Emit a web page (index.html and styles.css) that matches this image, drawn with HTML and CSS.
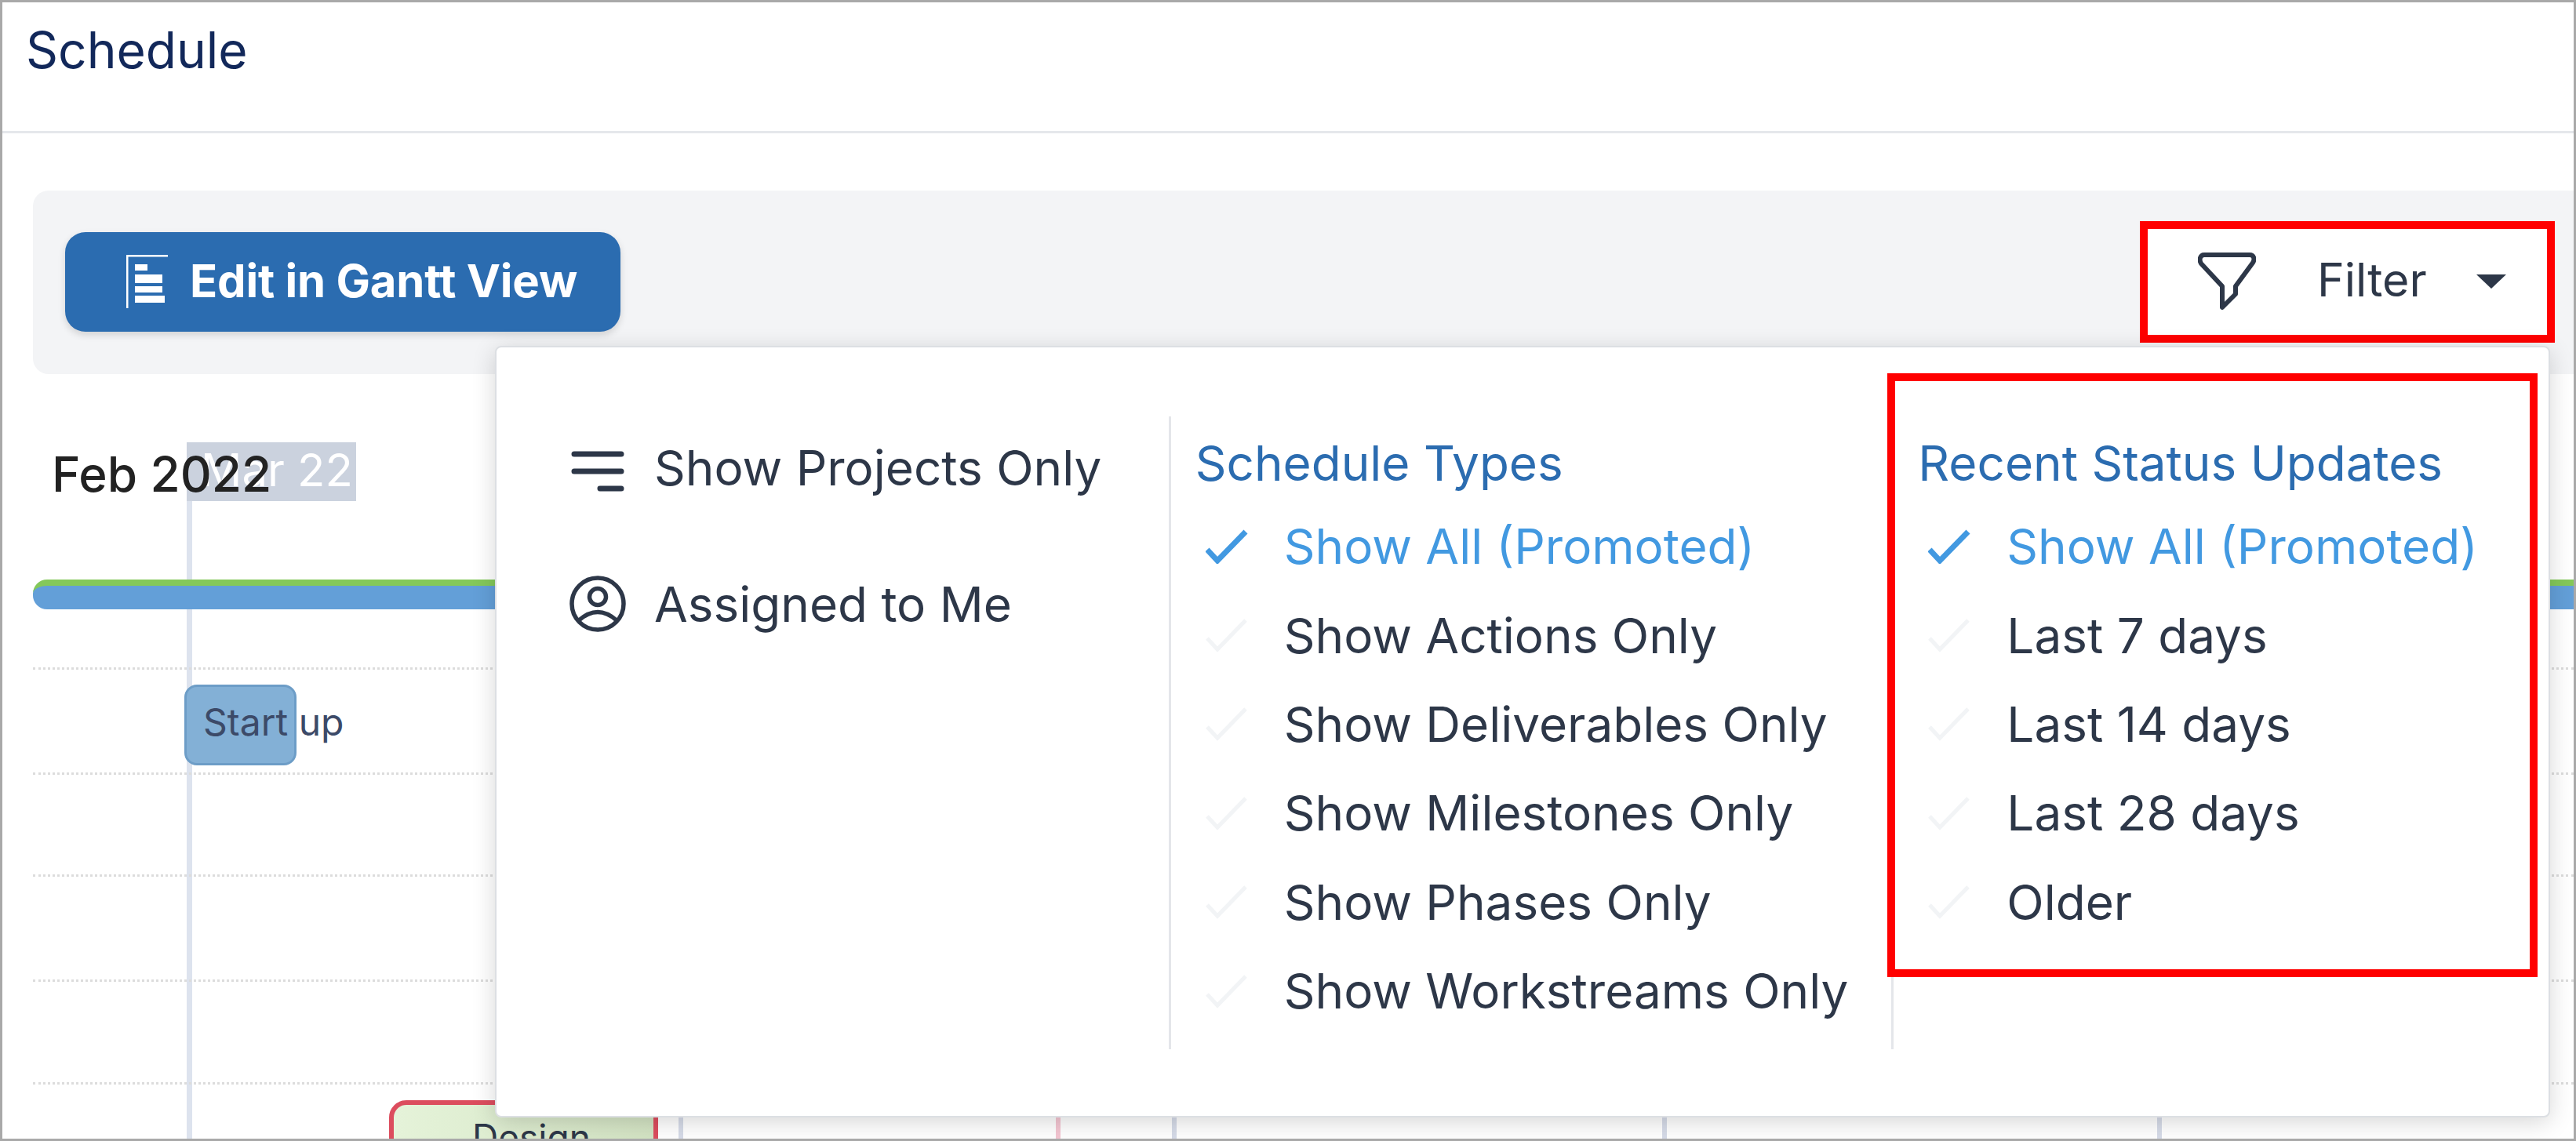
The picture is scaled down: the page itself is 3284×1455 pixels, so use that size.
FILE: index.html
```html
<!DOCTYPE html>
<html lang="en">
<head>
  <meta charset="UTF-8">
  <title>Schedule</title>
  <link rel="stylesheet" href="styles.css">
</head>
<body>
  <div class="frame">
    <div class="page-title">Schedule</div>

    <div class="toolbar">
      <button class="gantt-btn">
        <svg class="gantt-icon" viewBox="0 0 53 68" fill="#fff">
          <rect x="0" y="0" width="53" height="2.5"/>
          <rect x="0" y="0" width="2.5" height="68"/>
          <rect x="11" y="12" width="16" height="8"/>
          <rect x="11" y="25" width="35" height="11"/>
          <rect x="11" y="40" width="35" height="8"/>
          <rect x="11" y="52" width="38" height="9"/>
        </svg>
        <span class="gantt-label">Edit in Gantt View</span>
      </button>
      <div class="filter-btn">
        <svg class="funnel-icon" viewBox="0 0 74 74" fill="none" stroke="#2d3748" stroke-width="6" stroke-linejoin="round">
          <path d="M8 3H66C71 3 73 8 70 13L48 43V53L31 70V43L4 14C1 9 3 3 8 3Z"/>
        </svg>
        <span class="filter-label">Filter</span>
        <span class="caret"></span>
      </div>
    </div>

    <div class="gantt">
      <div class="vline vline-a"></div>
      <div class="vline vline-b"></div>
      <div class="vline vline-c"></div>
      <div class="vline vline-d"></div>
      <div class="vline vline-e"></div>

      <div class="today-line"></div>
      <div class="today-tag">Mar 22</div>
      <div class="month">Feb 2022</div>
      <div class="progress"></div>

      <div class="rows">
        <div></div>
        <div></div>
        <div></div>
        <div></div>
      </div>

      <div class="startup-bar"></div>
      <div class="startup-label">Start up</div>
      <div class="design-bar">Design</div>
    </div>

    <div class="dropdown">
      <div class="col col-quick">
        <div class="quick-item">
          <svg class="quick-icon" viewBox="0 0 72 72" fill="none" stroke="#2d3748" stroke-width="7" stroke-linecap="round">
            <path d="M6 19H66M6 41H66M39 63H66"/>
          </svg>
          Show Projects Only
        </div>
        <div class="quick-item">
          <svg class="quick-icon" viewBox="0 0 72 72" fill="none" stroke="#2d3748" stroke-width="5.5">
            <circle cx="36" cy="36" r="33"/>
            <circle cx="36" cy="27" r="10.5"/>
            <path d="M12 57Q36 36 60 57"/>
          </svg>
          Assigned to Me
        </div>
      </div>

      <div class="col">
        <div class="col-title">Schedule Types</div>
        <div class="option active"><svg class="check" viewBox="0 0 54 44"><polyline points="2,26 15,40 51,3"/></svg>Show All (Promoted)</div>
        <div class="option"><svg class="check" viewBox="0 0 54 44"><polyline points="2,26 15,40 51,3"/></svg>Show Actions Only</div>
        <div class="option"><svg class="check" viewBox="0 0 54 44"><polyline points="2,26 15,40 51,3"/></svg>Show Deliverables Only</div>
        <div class="option"><svg class="check" viewBox="0 0 54 44"><polyline points="2,26 15,40 51,3"/></svg>Show Milestones Only</div>
        <div class="option"><svg class="check" viewBox="0 0 54 44"><polyline points="2,26 15,40 51,3"/></svg>Show Phases Only</div>
        <div class="option"><svg class="check" viewBox="0 0 54 44"><polyline points="2,26 15,40 51,3"/></svg>Show Workstreams Only</div>
      </div>

      <div class="col col-recent">
        <div class="callout"></div>
        <div class="col-title">Recent Status Updates</div>
        <div class="option active"><svg class="check" viewBox="0 0 54 44"><polyline points="2,26 15,40 51,3"/></svg>Show All (Promoted)</div>
        <div class="option"><svg class="check" viewBox="0 0 54 44"><polyline points="2,26 15,40 51,3"/></svg>Last 7 days</div>
        <div class="option"><svg class="check" viewBox="0 0 54 44"><polyline points="2,26 15,40 51,3"/></svg>Last 14 days</div>
        <div class="option"><svg class="check" viewBox="0 0 54 44"><polyline points="2,26 15,40 51,3"/></svg>Last 28 days</div>
        <div class="option"><svg class="check" viewBox="0 0 54 44"><polyline points="2,26 15,40 51,3"/></svg>Older</div>
      </div>
    </div>
  </div>
</body>
</html>
```

FILE: styles.css
```css
body {
  margin: 0;
  overflow: hidden;
  background: #fff;
  font-family: 'Inter', 'Liberation Sans', sans-serif;
  color: #2d3748;
}
.frame {
  position: relative;
  box-sizing: border-box;
  width: 3284px;
  height: 1455px;
  border: 3px solid #a9a9a9;
  display: flex;
  flex-direction: column;
  overflow: hidden;
}
.page-title {
  box-sizing: border-box;
  height: 167px;
  padding: 22px 0 0 30px;
  font-size: 64px;
  line-height: 78px;
  color: #12285a;
  border-bottom: 3px solid #e5e7eb;
}
.toolbar {
  box-sizing: border-box;
  flex: none;
  height: 234px;
  margin: 73px 0 0 39px;
  padding: 0 24px 2px 41px;
  background: #f3f4f6;
  border-radius: 20px 0 0 20px;
  display: flex;
  align-items: center;
  justify-content: space-between;
}
.gantt-btn {
  box-sizing: border-box;
  height: 127px;
  width: 708px;
  padding: 0 0 0 78px;
  display: flex;
  align-items: center;
  gap: 28px;
  border: none;
  border-radius: 26px;
  background: #2b6cb0;
  color: #fff;
  font-family: inherit;
  font-size: 58px;
  font-weight: 700;
  letter-spacing: -0.2px;
  white-space: nowrap;
  box-shadow: 0 4px 10px rgba(0, 0, 0, 0.14);
}
.gantt-label {
  padding-bottom: 3px;
}
.gantt-icon {
  width: 53px;
  height: 68px;
  flex: none;
}
.filter-btn {
  box-sizing: border-box;
  width: 529px;
  height: 155px;
  border: 10px solid #f00;
  background: #fff;
  display: flex;
  align-items: center;
  padding-left: 64px;
}
.funnel-icon {
  width: 74px;
  height: 74px;
  flex: none;
  margin-right: 78px;
}
.filter-label {
  font-size: 59px;
  margin-right: 63px;
  padding-bottom: 5px;
}
.caret {
  width: 0;
  height: 0;
  border-left: 19px solid transparent;
  border-right: 19px solid transparent;
  border-top: 18px solid #2d3748;
}

/* chart behind the dropdown */
.gantt {
  position: relative;
  flex: 1;
  overflow: hidden;
}
.vline {
  position: absolute;
  top: 0;
  bottom: 0;
  width: 6px;
  background: #d6dbe8;
}
.vline-a { left: 862px; }
.vline-b { left: 1343px; background: #f4c6d2; }
.vline-c { left: 1491px; }
.vline-d { left: 2116px; }
.vline-e { left: 2747px; }
.today-line {
  position: absolute;
  left: 235px;
  top: 87px;
  bottom: 0;
  width: 7px;
  background: #dde3ee;
}
.today-tag {
  position: absolute;
  left: 235px;
  top: 87px;
  box-sizing: border-box;
  width: 216px;
  height: 75px;
  padding: 0 0 0 18px;
  background: #cbd2de;
  color: #fff;
  font-size: 58px;
  line-height: 70px;
  white-space: nowrap;
}
.month {
  position: absolute;
  left: 63px;
  top: 92px;
  font-size: 62px;
  line-height: 72px;
  font-weight: 500;
  color: #222;
  white-space: nowrap;
}
.progress {
  position: absolute;
  left: 39px;
  right: 0;
  top: 262px;
  box-sizing: border-box;
  height: 38px;
  background: #639fd8;
  border-top: 8px solid #84c85a;
  border-radius: 18px 0 0 18px;
}
.rows {
  position: absolute;
  left: 39px;
  right: 0;
  top: 374px;
  display: grid;
  grid-template-rows: 134px 130px 134px 131px;
  border-top: 3px dotted #dcdcdc;
}
.rows div {
  border-bottom: 3px dotted #dcdcdc;
}
.startup-bar {
  position: absolute;
  left: 232px;
  top: 396px;
  box-sizing: border-box;
  width: 143px;
  height: 103px;
  background: #83b0d6;
  border: 3px solid #6d9dc7;
  border-radius: 16px;
}
.startup-label {
  position: absolute;
  left: 256px;
  top: 416px;
  font-size: 48px;
  line-height: 56px;
  color: #3c4a68;
  white-space: nowrap;
}
.design-bar {
  position: absolute;
  left: 493px;
  top: 926px;
  box-sizing: border-box;
  width: 343px;
  height: 110px;
  padding: 13px 0 0 20px;
  border: 6px solid #dc4d5e;
  border-radius: 22px;
  background: linear-gradient(to right, #e5f3d9, #d3e3c3);
  font-size: 46px;
  line-height: 56px;
  text-align: center;
}

/* filter dropdown */
.dropdown {
  position: absolute;
  left: 628px;
  top: 438px;
  box-sizing: border-box;
  width: 2620px;
  height: 984px;
  padding-top: 88px;
  display: flex;
  align-items: flex-start;
  background: #fff;
  border: 2px solid #dcdfe3;
  border-radius: 8px;
  box-shadow: 0 6px 30px rgba(0, 0, 0, 0.16);
  font-size: 62px;
}
.col {
  box-sizing: border-box;
  height: 807px;
  width: 922px;
  padding: 26px 0 0 31px;
  border-left: 3px solid #e4e6ea;
}
.col-quick {
  width: 857px;
  padding: 15px 0 0 93px;
  border-left: none;
  display: flex;
  flex-direction: column;
  gap: 74px;
}
.col-recent {
  position: relative;
  width: 838px;
}
.quick-item {
  height: 100px;
  display: flex;
  align-items: center;
  gap: 36px;
  white-space: nowrap;
}
.quick-icon {
  width: 72px;
  height: 72px;
  flex: none;
}
.col-title {
  height: 68px;
  line-height: 68px;
  margin-bottom: 15px;
  color: #2b6cb0;
  white-space: nowrap;
}
.option {
  height: 113.4px;
  display: flex;
  align-items: center;
  gap: 46px;
  padding-left: 13px;
  white-space: nowrap;
}
.option.active {
  color: #4299e1;
}
.check {
  width: 54px;
  height: 44px;
  flex: none;
  fill: none;
  stroke: #f2f4f6;
  stroke-width: 5;
}
.option.active .check {
  stroke: #4299e1;
  stroke-width: 7;
}
.callout {
  position: absolute;
  left: -8px;
  top: -55px;
  box-sizing: border-box;
  width: 829px;
  height: 770px;
  border: 10px solid #f00;
}
```
